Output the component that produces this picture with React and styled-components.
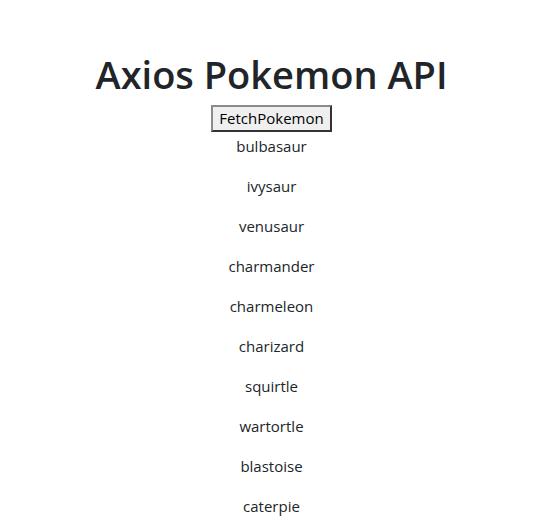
import React from 'react'
import styled, { createGlobalStyle } from 'styled-components'

const GlobalStyle = createGlobalStyle`
  body {
    margin: 0;
    font-family: "Open Sans", "Noto Sans", sans-serif;
    font-size: 15px;
    line-height: 1.5;
    color: #212529;
    background: #fff;
  }
`

const pokemon = [
  'bulbasaur', 'ivysaur', 'venusaur', 'charmander', 'charmeleon',
  'charizard', 'squirtle', 'wartortle', 'blastoise', 'caterpie',
]

const App = () => {
  return (
    <>
      <GlobalStyle />
      <Page>
        <Title>Axios Pokemon API</Title>
        <FetchButton>FetchPokemon</FetchButton>
        <List>
          {pokemon.map(name => (
            <Name key={name}>{name}</Name>
          ))}
        </List>
      </Page>
    </>
  )
}

const Page = styled.div`
  display: flex;
  flex-direction: column;
  align-items: center;
  padding-top: 50px;
`

const Title = styled.h1`
  margin: 0 0 7px;
  font-size: 38px;
  font-weight: 600;
  line-height: 48px;
  color: #212529;
`

const FetchButton = styled.button`
  font-family: "Open Sans", "Noto Sans", sans-serif;
  font-size: 15px;
  line-height: 21px;
  padding: 1px 6px;
  color: #000;
  background: #efefef;
  border: 2px solid;
  border-color: #8a8a8a #333 #333 #8a8a8a;
  margin: 0 0 2px;
`

const List = styled.div`
  display: flex;
  flex-direction: column;
  align-items: center;
`

const Name = styled.p`
  margin: 0 0 16px;
  line-height: 24px;
`

export default App
